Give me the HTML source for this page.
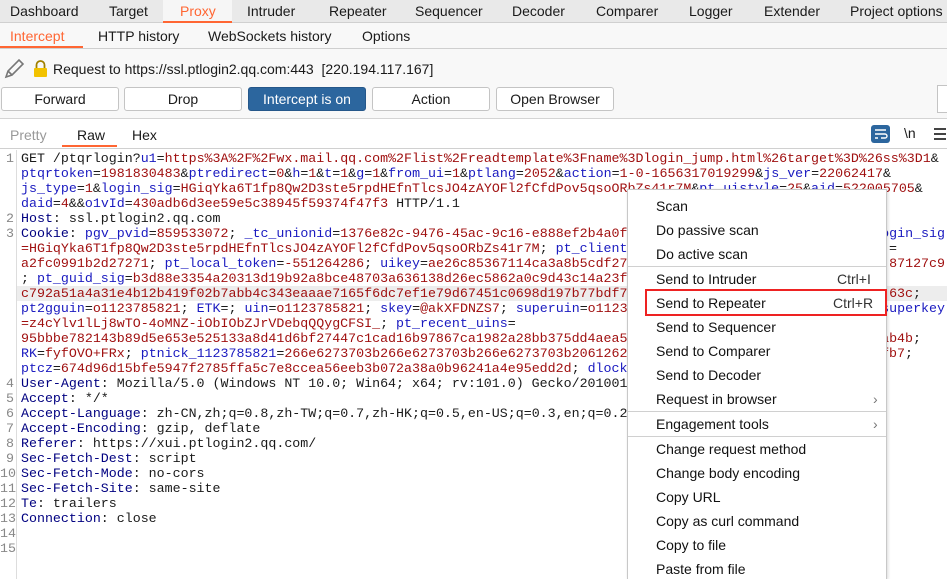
<!DOCTYPE html>
<html style="overflow:hidden;height:579px"><head><meta charset="utf-8"><style>
*{margin:0;padding:0;box-sizing:border-box}
body{width:947px;height:579px;overflow:hidden;background:#fff;font-family:"Liberation Sans",sans-serif;font-size:14px;color:#1a1a1a;position:relative}
.abs{position:absolute;white-space:nowrap}
#top{position:absolute;left:0;top:0;width:947px;height:23px;background:#e9e9e9;border-bottom:1px solid #d0d0d0}
#sub{position:absolute;left:0;top:23px;width:947px;height:26px;background:#f8f8f8;border-bottom:1px solid #cfcfcf}
#bar{position:absolute;left:0;top:49px;width:947px;height:70px;background:#f8f8f8;border-bottom:1px solid #d4d4d4}
.btn{position:absolute;top:87px;height:24px;width:118px;border:1px solid #c4c4c4;border-radius:3px;background:#fff;text-align:center;line-height:22px;font-size:14px}
#code{position:absolute;left:0;top:150px;width:947px;height:429px;font-family:"Liberation Mono",monospace;font-size:13.3px}
.r{position:absolute;left:21px;height:15px;line-height:15px;white-space:pre;width:926px}
.n{position:absolute;left:0;width:14px;text-align:right;color:#888;font-family:"Liberation Mono",monospace;font-size:13.3px;line-height:15px}
.rt{position:absolute;right:2px;top:0}
.h{color:#000080}.p{color:#1a1ac0}.v{color:#a01010}
#menu{position:absolute;left:627px;top:189px;width:260px;height:390px;background:#fff;border:1px solid #c8c8c8;border-bottom:none;box-shadow:1px 1px 3px rgba(0,0,0,.15)}
.mi{position:absolute;left:28px;font-size:14px;line-height:24px;height:24px;white-space:nowrap;color:#111}
.sep{position:absolute;left:0;width:258px;height:1px;background:#d0d0d0}
</style></head><body>
<div id="top"></div>
<div class="abs" style="left:163px;top:0;width:69px;height:23px;background:#f6f6f6;border-bottom:2px solid #ff6633"></div>
<div class="abs" style="top:3px;left:10px">Dashboard</div>
<div class="abs" style="top:3px;left:109px">Target</div>
<div class="abs" style="top:3px;left:180px;color:#ff6633">Proxy</div>
<div class="abs" style="top:3px;left:247px">Intruder</div>
<div class="abs" style="top:3px;left:329px">Repeater</div>
<div class="abs" style="top:3px;left:415px">Sequencer</div>
<div class="abs" style="top:3px;left:512px">Decoder</div>
<div class="abs" style="top:3px;left:596px">Comparer</div>
<div class="abs" style="top:3px;left:689px">Logger</div>
<div class="abs" style="top:3px;left:764px">Extender</div>
<div class="abs" style="top:3px;left:850px">Project options</div>
<div id="sub"></div>
<div class="abs" style="left:0;top:46px;width:83px;height:2px;background:#ff6633"></div>
<div class="abs" style="top:28px;left:10px;color:#ff6633">Intercept</div>
<div class="abs" style="top:28px;left:98px">HTTP history</div>
<div class="abs" style="top:28px;left:208px">WebSockets history</div>
<div class="abs" style="top:28px;left:362px">Options</div>
<div id="bar"></div>
<svg class="abs" style="left:3px;top:58px" width="22" height="22" viewBox="0 0 22 22"><path d="M3 19 L5 13 L16 2 L20 6 L9 17 Z M5 13 L9 17" fill="none" stroke="#777" stroke-width="1.6"/></svg>
<svg class="abs" style="left:33px;top:60px" width="15" height="18" viewBox="0 0 15 18"><path d="M3.5 8 V5 a4 4 0 0 1 8 0 V8" fill="none" stroke="#a08000" stroke-width="1.8"/><rect x="1" y="8" width="13" height="9" rx="1" fill="#f2c200"/></svg>
<div class="abs" style="top:61px;left:53px">Request to https://ssl.ptlogin2.qq.com:443&nbsp;&nbsp;[220.194.117.167]</div>
<div class="btn" style="left:1px">Forward</div>
<div class="btn" style="left:124px">Drop</div>
<div class="btn" style="left:248px;background:#2c669e;border-color:#25578a;color:#fff">Intercept is on</div>
<div class="btn" style="left:372px">Action</div>
<div class="btn" style="left:496px">Open Browser</div>
<div class="abs" style="left:937px;top:85px;width:14px;height:28px;border:1px solid #c4c4c4;background:#fff"></div>
<div class="abs" style="left:0;top:120px;width:947px;height:29px;background:#fff;border-bottom:1px solid #d0d0d0"></div>
<div class="abs" style="top:127px;left:10px;color:#999">Pretty</div>
<div class="abs" style="top:127px;left:77px">Raw</div>
<div class="abs" style="top:127px;left:132px">Hex</div>
<div class="abs" style="left:62px;top:145px;width:55px;height:2px;background:#ff6633"></div>
<div class="abs" style="left:871px;top:125px;width:19px;height:18px;background:#2c669e;border-radius:3px"></div>
<svg class="abs" style="left:871px;top:125px" width="19" height="18"><path d="M4 5h11M4 9h10a2 2 0 0 1 0 4h-4M4 13h3" stroke="#fff" stroke-width="1.4" fill="none"/></svg>
<div class="abs" style="top:125px;left:904px;font-size:14px">\n</div>
<svg class="abs" style="left:933px;top:127px" width="14" height="14"><path d="M1 2h12M1 7h12M1 12h12" stroke="#444" stroke-width="2"/></svg>

<div id="code">
<div class="abs" style="left:16px;top:0;width:1px;height:429px;background:#ddd"></div>
<div class="abs" style="left:17px;top:136px;width:930px;height:15px;background:#ededed"></div>
<div class="n" style="top:1px">1</div><div class="n" style="top:61px">2</div><div class="n" style="top:76px">3</div>
<div class="n" style="top:226px">4</div><div class="n" style="top:241px">5</div><div class="n" style="top:256px">6</div><div class="n" style="top:271px">7</div><div class="n" style="top:286px">8</div><div class="n" style="top:301px">9</div><div class="n" style="top:316px">10</div><div class="n" style="top:331px">11</div><div class="n" style="top:346px">12</div><div class="n" style="top:361px">13</div><div class="n" style="top:376px">14</div><div class="n" style="top:391px">15</div>

<div class="r" style="top:1px">GET /ptqrlogin?<span class="p">u1</span>=<span class="v">https%3A%2F%2Fwx.mail.qq.com%2Flist%2Freadtemplate%3Fname%3Dlogin_jump.html%26target%3D%26ss%3D1</span>&amp;</div>
<div class="r" style="top:16px"><span class="p">ptqrtoken</span>=<span class="v">1981830483</span>&amp;<span class="p">ptredirect</span>=<span class="v">0</span>&amp;<span class="p">h</span>=<span class="v">1</span>&amp;<span class="p">t</span>=<span class="v">1</span>&amp;<span class="p">g</span>=<span class="v">1</span>&amp;<span class="p">from_ui</span>=<span class="v">1</span>&amp;<span class="p">ptlang</span>=<span class="v">2052</span>&amp;<span class="p">action</span>=<span class="v">1-0-1656317019299</span>&amp;<span class="p">js_ver</span>=<span class="v">22062417</span>&amp;</div>
<div class="r" style="top:31px"><span class="p">js_type</span>=<span class="v">1</span>&amp;<span class="p">login_sig</span>=<span class="v">HGiqYka6T1fp8Qw2D3ste5rpdHEfnTlcsJO4zAYOFl2fCfdPov5qsoORbZs41r7M</span>&amp;<span class="p">pt_uistyle</span>=<span class="v">25</span>&amp;<span class="p">aid</span>=<span class="v">522005705</span>&amp;</div>
<div class="r" style="top:46px"><span class="p">daid</span>=<span class="v">4</span>&amp;&amp;<span class="p">o1vId</span>=<span class="v">430adb6d3ee59e5c38945f59374f47f3</span> HTTP/1.1</div>
<div class="r" style="top:61px"><span class="h">Host</span>: ssl.ptlogin2.qq.com</div>
<div class="r" style="top:76px"><span class="h">Cookie</span>: <span class="p">pgv_pvid</span>=<span class="v">859533072</span>; <span class="p">_tc_unionid</span>=<span class="v">1376e82c-9476-45ac-9c16-e888ef2b4a0f</span><span class="rt p">login_sig</span></div>
<div class="r" style="top:91px"><span class="v">=HGiqYka6T1fp8Qw2D3ste5rpdHEfnTlcsJO4zAYOFl2fCfdPov5qsoORbZs41r7M</span>; <span class="p">pt_client</span><span class="rt" style="right:50px">=</span></div>
<div class="r" style="top:106px"><span class="v">a2fc0991b2d27271</span>; <span class="p">pt_local_token</span>=<span class="v">-551264286</span>; <span class="p">uikey</span>=<span class="v">ae26c85367114ca3a8b5cdf27</span><span class="rt v">87127c9</span></div>
<div class="r" style="top:121px">; <span class="p">pt_guid_sig</span>=<span class="v">b3d88e3354a20313d19b92a8bce48703a636138d26ec5862a0c9d43c14a23f</span></div>
<div class="r" style="top:136px"><span class="v">c792a51a4a31e4b12b419f02b7abb4c343eaaae7165f6dc7ef1e79d67451c0698d197b77bdf7</span><span class="rt" style="right:26px"><span class="v">63c</span>;</span></div>
<div class="r" style="top:151px"><span class="p">pt2gguin</span>=<span class="v">o1123785821</span>; <span class="p">ETK</span>=; <span class="p">uin</span>=<span class="v">o1123785821</span>; <span class="p">skey</span>=<span class="v">@akXFDNZS7</span>; <span class="p">superuin</span>=<span class="v">o1123</span><span class="rt p">superkey</span></div>
<div class="r" style="top:166px"><span class="v">=z4cYlv1lLj8wTO-4oMNZ-iObIObZJrVDebqQQygCFSI_</span>; <span class="p">pt_recent_uins</span>=</div>
<div class="r" style="top:181px"><span class="v">95bbbe782143b89d5e653e525133a8d41d6bf27447c1cad16b97867ca1982a28bb375dd4aea5</span><span class="rt" style="right:26px"><span class="v">ab4b</span>;</span></div>
<div class="r" style="top:196px"><span class="p">RK</span>=<span class="v">fyfOVO+FRx</span>; <span class="p">ptnick_1123785821</span>=<span class="v">266e6273703b266e6273703b266e6273703b2061262</span><span class="rt" style="right:34px"><span class="v">fb7</span>;</span></div>
<div class="r" style="top:211px"><span class="p">ptcz</span>=<span class="v">674d96d15bfe5947f2785ffa5c7e8ccea56eeb3b072a38a0b96241a4e95edd2d</span>; <span class="p">dlock</span></div>
<div class="r" style="top:226px"><span class="h">User-Agent</span>: Mozilla/5.0 (Windows NT 10.0; Win64; x64; rv:101.0) Gecko/20100101</div>
<div class="r" style="top:241px"><span class="h">Accept</span>: */*</div>
<div class="r" style="top:256px"><span class="h">Accept-Language</span>: zh-CN,zh;q=0.8,zh-TW;q=0.7,zh-HK;q=0.5,en-US;q=0.3,en;q=0.2</div>
<div class="r" style="top:271px"><span class="h">Accept-Encoding</span>: gzip, deflate</div>
<div class="r" style="top:286px"><span class="h">Referer</span>: https://xui.ptlogin2.qq.com/</div>
<div class="r" style="top:301px"><span class="h">Sec-Fetch-Dest</span>: script</div>
<div class="r" style="top:316px"><span class="h">Sec-Fetch-Mode</span>: no-cors</div>
<div class="r" style="top:331px"><span class="h">Sec-Fetch-Site</span>: same-site</div>
<div class="r" style="top:346px"><span class="h">Te</span>: trailers</div>
<div class="r" style="top:361px"><span class="h">Connection</span>: close</div>
</div>

<div id="menu">
<div class="mi" style="top:4px">Scan</div>
<div class="mi" style="top:28px">Do passive scan</div>
<div class="mi" style="top:52px">Do active scan</div>
<div class="sep" style="top:76px"></div>
<div class="mi" style="top:77px">Send to Intruder</div><div class="mi" style="top:77px;left:209px;color:#333">Ctrl+I</div>
<div class="mi" style="top:101px">Send to Repeater</div><div class="mi" style="top:101px;left:205px;color:#333">Ctrl+R</div>
<div class="mi" style="top:125px">Send to Sequencer</div>
<div class="mi" style="top:149px">Send to Comparer</div>
<div class="mi" style="top:173px">Send to Decoder</div>
<div class="mi" style="top:197px">Request in browser</div><div class="mi" style="top:197px;left:245px;color:#777">›</div>
<div class="sep" style="top:221px"></div>
<div class="mi" style="top:222px">Engagement tools</div><div class="mi" style="top:222px;left:245px;color:#777">›</div>
<div class="sep" style="top:246px"></div>
<div class="mi" style="top:247px">Change request method</div>
<div class="mi" style="top:271px">Change body encoding</div>
<div class="mi" style="top:295px">Copy URL</div>
<div class="mi" style="top:319px">Copy as curl command</div>
<div class="mi" style="top:343px">Copy to file</div>
<div class="mi" style="top:367px">Paste from file</div>
</div>
<div class="abs" style="left:645px;top:289px;width:242px;height:27px;border:2px solid #ee2222"></div>
</body></html>
